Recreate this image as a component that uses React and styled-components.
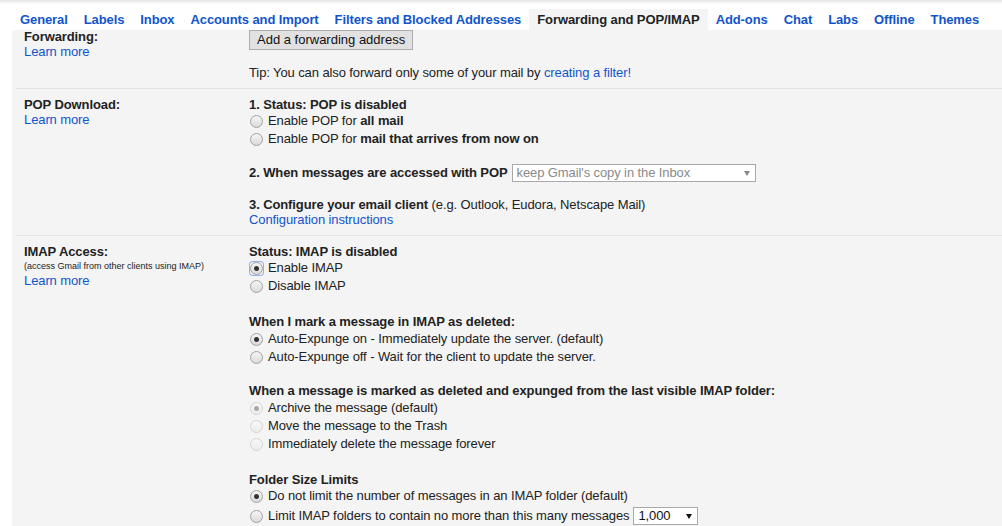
import styled, { createGlobalStyle } from "styled-components";

const GlobalStyle = createGlobalStyle`
  html, body {
    margin: 0;
    padding: 0;
    overflow: hidden;
    background: #fff;
  }
  body {
    font-family: "Liberation Sans", Arial, sans-serif;
    font-size: 13px;
    letter-spacing: -0.1px;
    color: #222;
  }
`;

const tabs = [
  "General",
  "Labels",
  "Inbox",
  "Accounts and Import",
  "Filters and Blocked Addresses",
  "Forwarding and POP/IMAP",
  "Add-ons",
  "Chat",
  "Labs",
  "Offline",
  "Themes",
];

const Radio = ({ checked, disabled, focused, tall, children }) => (
  <RadioRow $tall={tall}>
    <RadioWrap $focused={focused}>
      <RadioCircle $checked={checked} $disabled={disabled} />
    </RadioWrap>
    <span>{children}</span>
  </RadioRow>
);

const FakeSelect = ({ value, width, disabled }) => (
  <SelectBox $width={width} $disabled={disabled}>
    <span>{value}</span>
    <Caret $disabled={disabled} />
  </SelectBox>
);

const App = () => {
  return (
    <Page>
      <GlobalStyle />
      <TabBar>
        {tabs.map((t) => (
          <Tab key={t} $active={t === "Forwarding and POP/IMAP"}>
            {t}
          </Tab>
        ))}
      </TabBar>

      <Panel>
        <FirstRow>
          <LabelCell>
            <Title>Forwarding:</Title>
            <Link>Learn more</Link>
          </LabelCell>
          <ValueCell>
            <Button>Add a forwarding address</Button>
            <Para $gap={15}>
              Tip: You can also forward only some of your mail by{" "}
              <Link>creating a filter!</Link>
            </Para>
          </ValueCell>
        </FirstRow>

        <SettingRow>
          <LabelCell>
            <Title>POP Download:</Title>
            <Link>Learn more</Link>
          </LabelCell>
          <ValueCell>
            <Heading $lh={15}>1. Status: POP is disabled</Heading>
            <Radio>
              Enable POP for <b>all mail</b>
            </Radio>
            <Radio>
              Enable POP for <b>mail that arrives from now on</b>
            </Radio>
            <InlineLine $gap={16}>
              <b>2. When messages are accessed with POP</b>
              <FakeSelect
                value="keep Gmail's copy in the Inbox"
                width={244}
                disabled
              />
            </InlineLine>
            <Para $gap={15}>
              <b>3. Configure your email client</b> (e.g. Outlook, Eudora,
              Netscape Mail)
              <br />
              <Link>Configuration instructions</Link>
            </Para>
          </ValueCell>
        </SettingRow>

        <SettingRow $last>
          <LabelCell>
            <Title>IMAP Access:</Title>
            <Note>(access Gmail from other clients using IMAP)</Note>
            <Link>Learn more</Link>
          </LabelCell>
          <ValueCell>
            <Heading $lh={15}>Status: IMAP is disabled</Heading>
            <Radio checked focused>
              Enable IMAP
            </Radio>
            <Radio>Disable IMAP</Radio>

            <Heading $gap={19}>When I mark a message in IMAP as deleted:</Heading>
            <Radio checked>
              Auto-Expunge on - Immediately update the server. (default)
            </Radio>
            <Radio>Auto-Expunge off - Wait for the client to update the server.</Radio>

            <Heading $gap={17}>
              When a message is marked as deleted and expunged from the last
              visible IMAP folder:
            </Heading>
            <Radio checked disabled>
              Archive the message (default)
            </Radio>
            <Radio disabled>Move the message to the Trash</Radio>
            <Radio disabled>Immediately delete the message forever</Radio>

            <Heading $gap={19} $lh={15}>
              Folder Size Limits
            </Heading>
            <Radio checked>
              Do not limit the number of messages in an IMAP folder (default)
            </Radio>
            <Radio tall>
              Limit IMAP folders to contain no more than this many messages
              <FakeSelect value="1,000" width={65} />
            </Radio>
          </ValueCell>
        </SettingRow>
      </Panel>
    </Page>
  );
};

export default App;

const Page = styled.div`
  display: flex;
  flex-direction: column;
  min-height: 100vh;
`;

const TabBar = styled.div`
  display: flex;
  padding: 9px 0 0 12px;
  background: linear-gradient(#e4e4e4, #fff 4px);
`;

const Tab = styled.div`
  padding: 0 8px;
  line-height: 21px;
  font-weight: bold;
  white-space: nowrap;
  color: ${(p) => (p.$active ? "#222" : "#15c")};
  background: ${(p) => (p.$active ? "#f4f4f4" : "transparent")};
  cursor: pointer;
`;

const Panel = styled.div`
  flex: 1;
  margin-left: 12px;
  background: #f4f4f4;
  overflow: hidden;
`;

const SettingRow = styled.div`
  display: flex;
  margin-left: 4px;
  padding: 8px 0 8px 8px;
  border-bottom: ${(p) => (p.$last ? "none" : "1px solid #e2e2e2")};
`;

const FirstRow = styled(SettingRow)`
  margin-top: -1px;
  padding-top: 0;
`;

const LabelCell = styled.div`
  width: 225px;
  flex-shrink: 0;
  line-height: 15px;
`;

const ValueCell = styled.div`
  flex: 1;
  min-width: 0;
`;

const Title = styled.div`
  font-weight: bold;
`;

const Note = styled.div`
  font-size: 9px;
  line-height: 14px;
  letter-spacing: 0;
`;

const Link = styled.span`
  color: #15c;
  cursor: pointer;
`;

const Heading = styled.div`
  font-weight: bold;
  line-height: ${(p) => p.$lh || 16}px;
  margin-top: ${(p) => p.$gap || 0}px;
`;

const Para = styled.div`
  line-height: 15px;
  margin-top: ${(p) => p.$gap || 0}px;
`;

const InlineLine = styled.div`
  display: flex;
  align-items: center;
  height: 18px;
  line-height: 18px;
  margin-top: ${(p) => p.$gap || 0}px;
`;

const Button = styled.button`
  display: block;
  margin-top: 1px;
  height: 20px;
  padding: 0 7px;
  font: inherit;
  line-height: 18px;
  color: #111;
  background: #e1e1e1;
  border: 1px solid #adadad;
  border-radius: 0;
`;

const RadioRow = styled.div`
  display: flex;
  align-items: center;
  height: ${(p) => (p.$tall ? 20 : 18)}px;
  margin-top: ${(p) => (p.$tall ? 1 : 0)}px;
  line-height: 18px;
  white-space: nowrap;
`;

const RadioWrap = styled.span`
  display: flex;
  align-items: center;
  justify-content: center;
  width: 13px;
  height: 13px;
  margin: 0 5px 0 1px;
  border-radius: 3px;
  box-shadow: ${(p) => (p.$focused ? "0 0 0 1px #8fb2ec" : "none")};
`;

const RadioCircle = styled.span`
  display: flex;
  align-items: center;
  justify-content: center;
  box-sizing: border-box;
  width: 13px;
  height: 13px;
  border-radius: 50%;
  border: 1px solid ${(p) => (p.$disabled ? "#d4d4d4" : "#a2a2a2")};
  background: ${(p) =>
    p.$disabled
      ? "linear-gradient(#f8f8f8, #ececec)"
      : "linear-gradient(#f6f6f6, #dadada)"};

  &::after {
    content: "";
    display: ${(p) => (p.$checked ? "block" : "none")};
    width: 5px;
    height: 5px;
    border-radius: 50%;
    background: ${(p) => (p.$disabled ? "#a8a8a8" : "#333")};
  }
`;

const SelectBox = styled.span`
  display: inline-flex;
  align-items: center;
  justify-content: space-between;
  box-sizing: border-box;
  width: ${(p) => p.$width}px;
  height: 18px;
  margin-left: 4px;
  padding: 0 5px 0 4px;
  background: #fff;
  border: 1px solid #a9a9a9;
  color: ${(p) => (p.$disabled ? "#8a8a8a" : "#111")};
  line-height: 16px;
  font-weight: normal;
`;

const Caret = styled.span`
  width: 0;
  height: 0;
  border-left: 3px solid transparent;
  border-right: 3px solid transparent;
  border-top: 5px solid ${(p) => (p.$disabled ? "#8a8a8a" : "#111")};
`;
